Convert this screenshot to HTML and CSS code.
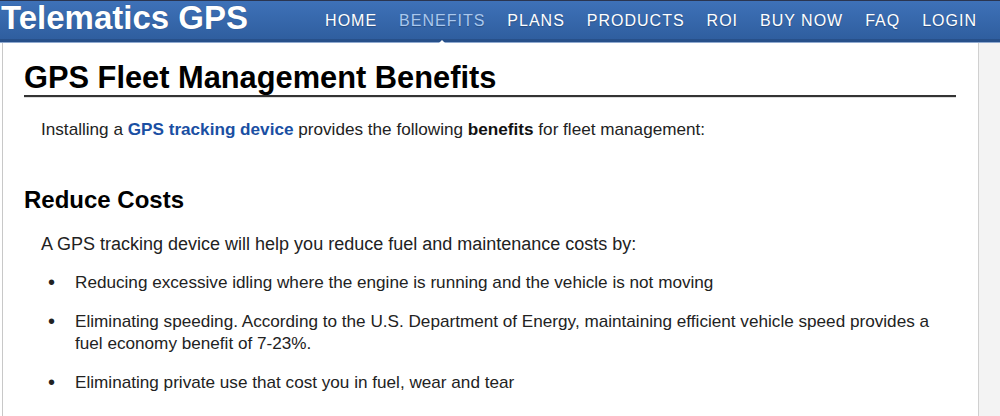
FILE: index.html
```html
<!DOCTYPE html>
<html lang="en">
<head>
<meta charset="utf-8">
<title>GPS Fleet Management Benefits</title>
<link rel="stylesheet" href="styles.css">
</head>
<body>
<header class="topbar">
  <div class="brand">Telematics GPS</div>
  <nav class="nav">
    <a href="#">HOME</a>
    <a href="#" class="active">BENEFITS</a>
    <a href="#">PLANS</a>
    <a href="#">PRODUCTS</a>
    <a href="#">ROI</a>
    <a href="#">BUY NOW</a>
    <a href="#">FAQ</a>
    <a href="#">LOGIN</a>
  </nav>
</header>
<div class="page">
  <main class="content">
    <h1>GPS Fleet Management Benefits</h1>
    <p class="intro">Installing a <a href="#">GPS tracking device</a> provides the following <strong>benefits</strong> for fleet management:</p>
    <h2>Reduce Costs</h2>
    <p class="lead">A GPS tracking device will help you reduce fuel and maintenance costs by:</p>
    <ul class="points">
      <li>Reducing excessive idling where the engine is running and the vehicle is not moving</li>
      <li>Eliminating speeding. According to the U.S. Department of Energy, maintaining efficient vehicle speed provides a fuel economy benefit of 7-23%.</li>
      <li>Eliminating private use that cost you in fuel, wear and tear</li>
    </ul>
  </main>
  <aside class="side"></aside>
</div>
</body>
</html>
```
FILE: styles.css
```css
html, body {
  margin: 0;
  padding: 0;
}
body {
  font-family: "Liberation Sans", Arial, sans-serif;
  color: #222;
  background: #fff;
  height: 416px;
  overflow: hidden;
}
.topbar {
  height: 38px;
  border-top: 1px solid #2a3550;
  background: linear-gradient(#3e71b8, #2f5e9f);
  border-bottom: 3px solid #27508a;
  box-shadow: 0 1px 0 #8fa9cf;
  display: flex;
  align-items: center;
  justify-content: space-between;
  position: relative;
  z-index: 1;
}
.brand {
  color: #fff;
  font-weight: bold;
  font-size: 33px;
  padding-left: 1px;
  line-height: 1;
  margin-top: -5px;
  text-shadow: 0 0 1px rgba(0,0,0,0.3);
}
.nav {
  display: flex;
  gap: 22px;
  padding-right: 23px;
  margin-top: 1px;
}
.nav a {
  color: #fff;
  text-decoration: none;
  font-size: 16px;
  letter-spacing: 1px;
  position: relative;
  text-shadow: 0 1px 1px rgba(0,0,0,0.25);
}
.nav a.active {
  color: #a9c8ee;
}
.nav a.active::after {
  content: "";
  position: absolute;
  left: 50%;
  margin-left: -6px;
  bottom: -16px;
  border-left: 6px solid transparent;
  border-right: 6px solid transparent;
  border-bottom: 6px solid #fff;
}
.page {
  display: flex;
  height: 374px;
}
.content {
  width: 977px;
  margin-left: 2px;
  background: #fff;
  border-left: 1px solid #c8c8c8;
  border-right: 1px solid #d0d0d0;
  padding: 18px 20px 0 21px;
  box-sizing: border-box;
}
.side {
  flex: 1;
  background: #f3f3f3;
}
h1 {
  font-size: 30.8px;
  line-height: 35px;
  margin: 0;
  color: #000;
  padding: 0;
  border-bottom: 2px solid #333;
  box-shadow: 0 1px 0 #ddd;
  width: 932px;
}
p {
  margin: 0;
  line-height: 22px;
}
.intro {
  font-size: 17.15px;
  margin: 21px 0 0 17px;
}
.intro a {
  color: #1a4fa3;
  font-weight: bold;
  text-decoration: none;
}
.intro strong {
  color: #111;
}
h2 {
  font-size: 24px;
  line-height: 28px;
  margin: 46px 0 0 0;
  color: #000;
}
.lead {
  font-size: 18px;
  margin: 19px 0 0 17px;
}
.points {
  list-style: none;
  margin: 16px 0 0 0;
  padding: 0 10px 0 24px;
}
.points li {
  display: flex;
  font-size: 17.15px;
  line-height: 22px;
  margin-bottom: 17px;
}
.points li::before {
  content: "\2022";
  flex: 0 0 27px;
  font-size: 20px;
}
```
